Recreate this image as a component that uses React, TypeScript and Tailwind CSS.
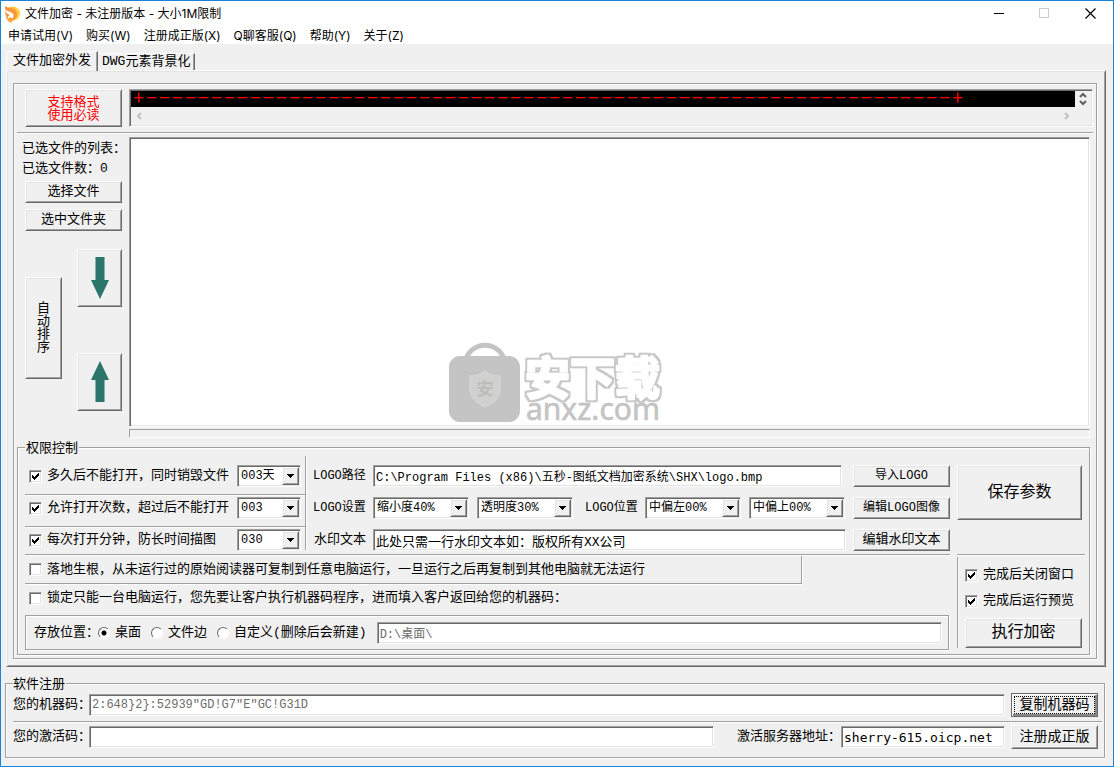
import { useState, type ReactNode } from 'react'
import clsx from 'clsx'

const SUNKEN =
    'border border-t-[#a0a0a0] border-l-[#a0a0a0] border-r-white border-b-white shadow-[inset_1px_1px_0_#696969,inset_-1px_-1px_0_#e3e3e3]'
const RAISED =
    'border border-t-white border-l-white border-r-[#696969] border-b-[#696969] shadow-[inset_1px_1px_0_#e3e3e3,inset_-1px_-1px_0_#a0a0a0]'
const GROOVE = 'border border-[#a0a0a0] shadow-[1px_1px_0_#fff,inset_1px_1px_0_#fff]'

const MENU = ['申请试用(V)', '购买(W)', '注册成正版(X)', 'Q聊客服(Q)', '帮助(Y)', '关于(Z)']
const BANNER = '＋' + '－'.repeat(62) + '＋'

function Button({ children, className, label }: { children: ReactNode; className?: string; label?: string }) {
    return (
        <button type="button" aria-label={label} className={clsx('flex shrink-0 items-center justify-center bg-[#f0f0f0]', RAISED, className)}>
            {children}
        </button>
    )
}

function Divider({ className }: { className?: string }) {
    return <div className={clsx('h-[2px] border-t border-b border-t-[#a0a0a0] border-b-white', className)} />
}

function Select({ id, value, className, label }: { id: string; value: string; className: string; label: string }) {
    return (
        <div className={clsx('relative h-[22px] shrink-0', className)}>
            <select
                id={id}
                aria-label={label}
                defaultValue={value}
                className={clsx('h-full w-full appearance-none bg-white pr-5 pl-[3px] text-xs leading-4 outline-none', SUNKEN)}
            >
                <option>{value}</option>
            </select>
            <span className={clsx('pointer-events-none absolute top-[2px] right-[2px] flex h-[18px] w-[17px] items-center justify-center bg-[#f0f0f0]', RAISED)}>
                <svg width="7" height="4" viewBox="0 0 7 4" shapeRendering="crispEdges">
                    <path d="M0 0h7v1H6v1H5v1H4v1H3V3H2V2H1V1H0z" />
                </svg>
            </span>
        </div>
    )
}

function Check({ label, checked, className }: { label: string; checked?: boolean; className?: string }) {
    const [on, setOn] = useState(!!checked)
    return (
        <label className={clsx('flex items-center gap-[5px] whitespace-nowrap', className)}>
            <span className="grid h-[13px] w-[13px] shrink-0">
                <input
                    type="checkbox"
                    checked={on}
                    onChange={(e) => setOn(e.target.checked)}
                    className={clsx('col-start-1 row-start-1 h-[13px] w-[13px] appearance-none bg-white', SUNKEN)}
                />
                {on && (
                    <svg className="pointer-events-none col-start-1 row-start-1" width="13" height="13" viewBox="0 0 13 13" shapeRendering="crispEdges">
                        <path d="M3 5h1v1h1v1h1V6h1V5h1V4h1V3h1v3H9v1H8v1H7v1H6v1H5V9H4V8H3z" />
                    </svg>
                )}
            </span>
            {label}
        </label>
    )
}

function Radio({ label, checked }: { label: string; checked?: boolean }) {
    return (
        <label className="flex items-center gap-[5px] whitespace-nowrap">
            <input
                type="radio"
                name="location"
                defaultChecked={checked}
                className="h-3 w-3 appearance-none rounded-full border border-t-[#696969] border-r-white border-b-white border-l-[#696969] bg-white checked:bg-[radial-gradient(circle,#000_2px,#fff_3px)]"
            />
            {label}
        </label>
    )
}

function Chevron({ d, color }: { d: string; color: string }) {
    return (
        <svg width="8" height="8" viewBox="0 0 8 8" fill="none" stroke={color} strokeWidth="2">
            <path d={d} />
        </svg>
    )
}

function Arrow({ up }: { up?: boolean }) {
    return (
        <svg width="18" height="42" viewBox="0 0 18 42" fill="#2b756b">
            <path d={up ? 'M9 0 18 19H13.500V41H4.500V19H0z' : 'M4.500 0H13.500V23H18L9 42 0 23H4.500z'} />
        </svg>
    )
}

function TitleBar() {
    return (
        <header className="bg-white font-[Inter,'Noto_Sans_CJK_SC',sans-serif] text-xs">
            <div className="flex h-[25px] items-center">
                <svg className="mr-1 ml-1" width="16" height="18" viewBox="0 0 16 18">
                    <circle cx="8" cy="8.500" r="7" fill="#fdd23c" />
                    <path d="M0 1c2 2 5 1 7 2 4 1 6 4 5 8-1 3-4 5-8 6L2 14C0 10 0 5 0 1z" fill="#f7973a" />
                    <path d="M0 4c2 3 5 2 7 4 2 1 2 4 0 6l-1-2-4 2c1-2 1-3 3-4C2 9 0 7 0 4z" fill="#fff" />
                    <path d="M2 13c1 2 3 3 5 4" stroke="#f7b050" strokeWidth="2" fill="none" />
                </svg>
                <h1 className="flex-1">文件加密 - 未注册版本 - 大小1M限制</h1>
                <button type="button" aria-label="最小化" className="flex w-[45px] justify-center">
                    <svg width="11" height="11"><path d="M0 5.500h10" stroke="#000" /></svg>
                </button>
                <button type="button" aria-label="最大化" className="flex w-[45px] justify-center">
                    <svg width="11" height="11"><path d="M.5.5h9v9h-9z" fill="none" stroke="#ccc" /></svg>
                </button>
                <button type="button" aria-label="关闭" className="flex w-[46px] justify-center">
                    <svg width="11" height="11"><path d="M.5.5l10 10M10.500.5l-10 10" stroke="#000" strokeWidth="1.200" /></svg>
                </button>
            </div>
            <nav className="flex h-[18px] items-end gap-[13px] pl-[7px]">
                {MENU.map((item) => (
                    <a key={item} href="#" className="leading-4">
                        {item}
                    </a>
                ))}
            </nav>
        </header>
    )
}

function FileArea() {
    return (
        <>
            <div className="flex pt-[5px]">
                <Button className="ml-2 h-[38px] w-[97px] text-[#f00]">
                    <span className="pt-px leading-[13px]">
                        支持格式
                        <br />
                        使用必读
                    </span>
                </Button>
                <div className={clsx('ml-[7px] min-w-0 flex-1 p-px', SUNKEN)}>
                    <div className="flex h-4">
                        <input readOnly aria-label="说明" value={BANNER} className="h-4 min-w-0 flex-1 bg-black pl-px leading-4 font-bold text-[#f00] outline-none" />
                        <div className="flex w-4 flex-col items-center justify-center">
                            <Chevron d="M1 6l3-3 3 3" color="#606060" />
                            <Chevron d="M1 2l3 3 3-3" color="#606060" />
                        </div>
                    </div>
                    <div className="flex h-[18px] items-center justify-between pr-5 pl-1">
                        <Chevron d="M6 1L3 4l3 3" color="#bfbfbf" />
                        <Chevron d="M2 1l3 3-3 3" color="#bfbfbf" />
                    </div>
                </div>
            </div>
            <Divider className="mt-[5px]" />
            <div className="mt-[3px] mr-[3px] flex">
                <div className="w-28 shrink-0 pt-[2px]">
                    <p className="ml-[5px] h-5 leading-5 whitespace-nowrap">已选文件的列表：</p>
                    <p className="ml-[5px] h-5 leading-5 whitespace-nowrap">已选文件数：0</p>
                    <div className="mt-[2px] ml-2 flex w-[97px] flex-col gap-[6px]">
                        <Button className="h-[22px]">选择文件</Button>
                        <Button className="h-[22px]">选中文件夹</Button>
                    </div>
                    <div className="mt-[18px] ml-2 flex w-[97px] items-start justify-between">
                        <Button className="mt-7 h-[102px] w-[37px]">
                            <span className="w-[13px] leading-[13px]">自动排序</span>
                        </Button>
                        <div className="flex flex-col gap-[46px]">
                            <Button label="下移" className="h-[58px] w-[45px]">
                                <Arrow />
                            </Button>
                            <Button label="上移" className="h-[58px] w-[45px]">
                                <Arrow up />
                            </Button>
                        </div>
                    </div>
                </div>
                <div className="flex min-w-0 flex-1 flex-col gap-[2px]">
                    <div role="listbox" aria-label="已选文件" className={clsx('h-[290px] bg-white', SUNKEN)} />
                    <div className="h-[9px] border border-t-[#a0a0a0] border-r-white border-b-white border-l-[#a0a0a0]" />
                </div>
            </div>
        </>
    )
}

function Permissions() {
    return (
        <section className={clsx('mt-[9px] mr-[3px] flex flex-col pr-1 pb-1 pl-[7px]', GROOVE)}>
            <h2 className="z-10 -mt-2 w-fit bg-[#f0f0f0] px-px leading-[18px]">权限控制</h2>
            <div className="-mt-[2px] flex gap-[7px]">
                <div className="min-w-0 flex-1">
                    <div className="flex">
                        <div className="w-[280px] shrink-0 pt-[9px] pb-[3px]">
                            <div className="flex h-[22px] items-center justify-between pr-1 pl-1">
                                <Check checked label="多久后不能打开，同时销毁文件" />
                                <Select id="days" label="天数" value="003天" className="w-16" />
                            </div>
                            <Divider className="mt-[7px] mb-px" />
                            <div className="flex h-[22px] items-center justify-between pr-1 pl-1">
                                <Check checked label="允许打开次数，超过后不能打开" />
                                <Select id="times" label="次数" value="003" className="w-16" />
                            </div>
                            <Divider className="mt-[7px] mb-px" />
                            <div className="flex h-[22px] items-center justify-between pr-1 pl-1">
                                <Check checked label="每次打开分钟，防长时间描图" />
                                <Select id="minutes" label="分钟" value="030" className="w-16" />
                            </div>
                        </div>
                        <div className="mb-1 w-[2px] border-r border-l border-r-white border-l-[#a0a0a0]" />
                        <div className="flex min-w-0 flex-1 flex-col gap-[10px] pt-[9px] pb-[3px] pl-[6px]">
                            <div className="flex h-[22px] items-center">
                                <label htmlFor="logo" className="w-[60px] shrink-0 text-xs">
                                    LOGO路径
                                </label>
                                <input
                                    id="logo"
                                    defaultValue="C:\Program Files (x86)\五秒-图纸文档加密系统\SHX\logo.bmp"
                                    className={clsx('mr-[11px] h-[22px] min-w-0 flex-1 bg-white pl-[2px] text-xs outline-none', SUNKEN)}
                                />
                                <Button className="h-[22px] w-[97px] text-xs">导入LOGO</Button>
                            </div>
                            <div className="flex h-[22px] items-center">
                                <label htmlFor="scale" className="w-[60px] shrink-0 text-xs">
                                    LOGO设置
                                </label>
                                <Select id="scale" label="缩小度" value="缩小度40%" className="mr-2 w-24" />
                                <Select id="alpha" label="透明度" value="透明度30%" className="w-24" />
                                <label htmlFor="posx" className="ml-3 w-[60px] shrink-0 text-xs">
                                    LOGO位置
                                </label>
                                <Select id="posx" label="水平位置" value="中偏左00%" className="mr-2 w-24" />
                                <Select id="posy" label="垂直位置" value="中偏上00%" className="mr-auto w-24" />
                                <Button className="h-[22px] w-[97px] text-xs">编辑LOGO图像</Button>
                            </div>
                            <div className="flex h-[22px] items-center">
                                <label htmlFor="mark" className="w-[60px] shrink-0 pl-px">
                                    水印文本
                                </label>
                                <input
                                    id="mark"
                                    defaultValue="此处只需一行水印文本如：版权所有XX公司"
                                    className={clsx('mr-[7px] h-[22px] min-w-0 flex-1 bg-white pl-[2px] outline-none', SUNKEN)}
                                />
                                <Button className="h-[22px] w-[97px]">编辑水印文本</Button>
                            </div>
                        </div>
                    </div>
                    <Divider />
                    <div className="flex h-7 w-[84%] items-center border-r border-b border-[#a0a0a0] pl-1 shadow-[1px_1px_0_#fff]">
                        <Check label="落地生根，从未运行过的原始阅读器可复制到任意电脑运行，一旦运行之后再复制到其他电脑就无法运行" />
                    </div>
                    <div className="flex h-7 items-center pl-1">
                        <Check label="锁定只能一台电脑运行，您先要让客户执行机器码程序，进而填入客户返回给您的机器码：" />
                    </div>
                    <div className={clsx('mt-[3px] mr-px flex h-[35px] items-center pr-[6px] pl-2', GROOVE)}>
                        <span className="w-16 shrink-0 whitespace-nowrap">存放位置：</span>
                        <div className="mr-[10px] flex gap-[10px]">
                            <Radio checked label="桌面" />
                            <Radio label="文件边" />
                            <Radio label="自定义(删除后会新建)" />
                        </div>
                        <input aria-label="自定义位置" disabled value={'D:\\桌面\\'} className={clsx('h-[22px] min-w-0 flex-1 bg-white pl-[2px] text-xs text-[#6d6d6d]', SUNKEN)} />
                    </div>
                </div>
                <div className="flex w-32 shrink-0 flex-col">
                    <Button className="mt-[9px] mr-[3px] h-[55px] text-base">保存参数</Button>
                    <Divider className="mt-[34px]" />
                    <div className="mt-px flex flex-col border-l border-[#a0a0a0] pr-[3px] pl-[7px] shadow-[inset_1px_0_0_#fff]">
                        <Check checked label="完成后关闭窗口" className="mt-[5px] h-[26px]" />
                        <Check checked label="完成后运行预览" className="h-[26px]" />
                        <Button className="mt-1 h-[30px] text-base">执行加密</Button>
                    </div>
                </div>
            </div>
        </section>
    )
}

function Registration() {
    return (
        <section className={clsx('mt-4 mr-2 mb-[6px] ml-1 flex flex-col pb-[9px]', GROOVE)}>
            <h2 className="z-10 -mt-2 ml-[7px] w-fit bg-[#f0f0f0] pr-px leading-[18px]">软件注册</h2>
            <div className="flex h-[22px] items-center pr-[6px] pl-[7px]">
                <label htmlFor="machine" className="w-[76px] shrink-0 whitespace-nowrap">
                    您的机器码：
                </label>
                <input id="machine" readOnly value="2:648}2}:52939″GD!G7″E″GC!G31D" className={clsx('h-[22px] min-w-0 flex-1 bg-white pl-[2px] text-xs text-[#6d6d6d] outline-none', SUNKEN)} />
                <button type="button" className="ml-[6px] h-6 w-[87px] border border-[#696969] bg-[#f0f0f0] p-[2px] text-sm shadow-[inset_1px_1px_0_#fff,inset_-2px_-2px_0_#888]">
                    <span className="block border border-dotted border-black leading-4">复制机器码</span>
                </button>
            </div>
            <Divider className="mt-[5px] mr-[2px] ml-[7px]" />
            <div className="mt-[3px] flex h-[22px] items-center pr-[6px] pl-[7px]">
                <label htmlFor="code" className="w-[76px] shrink-0 whitespace-nowrap">
                    您的激活码：
                </label>
                <input id="code" className={clsx('h-[22px] min-w-0 flex-1 bg-white pl-[2px] text-xs outline-none', SUNKEN)} />
                <label htmlFor="server" className="ml-[23px] w-[104px] shrink-0 whitespace-nowrap">
                    激活服务器地址：
                </label>
                <input
                    id="server"
                    defaultValue="sherry-615.oicp.net"
                    className={clsx("h-[22px] w-[164px] bg-white pl-[2px] font-['DejaVu_Sans_Mono',monospace] outline-none", SUNKEN)}
                />
                <Button className="ml-[6px] h-6 w-[87px] text-sm">注册成正版</Button>
            </div>
        </section>
    )
}

function Watermark() {
    return (
        <div className="pointer-events-none absolute inset-0 z-20 flex items-center justify-center">
            <svg className="overflow-visible" width="216" height="84" viewBox="0 0 216 84">
                <filter id="outline" x="-5%" y="-10%" width="110%" height="120%">
                    <feMorphology in="SourceAlpha" operator="dilate" radius="2" result="fat" />
                    <feFlood floodColor="#c8c8c8" />
                    <feComposite in2="fat" operator="in" result="edge" />
                    <feMerge>
                        <feMergeNode in="edge" />
                        <feMergeNode in="SourceGraphic" />
                    </feMerge>
                </filter>
                <path d="M17 17a20 20 0 0 1 38 0" fill="none" stroke="#c4c4c4" strokeWidth="5" />
                <rect x="0" y="14" width="71" height="66" rx="11" fill="#c4c4c4" />
                <path d="M36 29c5 4 10 5 15 5v14c0 8-7 13-15 17-8-4-15-9-15-17V34c5 0 10-1 15-5z" fill="#d0d0ce" stroke="#dadada" />
                <text x="36" y="53" textAnchor="middle" fontSize="17" fontWeight="bold" fill="#bdbdbd" fontFamily="Noto Sans CJK SC, sans-serif">
                    安
                </text>
                <text
                    x="76"
                    y="53"
                    fontSize="45"
                    fontWeight="bold"
                    fill="#fff"
                    stroke="#fff"
                    strokeWidth="2.500"
                    strokeLinejoin="round"
                    filter="url(#outline)"
                    fontFamily="Noto Sans CJK SC, sans-serif"
                >
                    安下载
                </text>
                <text x="77" y="78" fontSize="30" fill="#c4c4c4" stroke="#c4c4c4" strokeWidth=".6" fontFamily="Noto Sans, sans-serif">
                    anxz.com
                </text>
            </svg>
        </div>
    )
}

export default function App() {
    return (
        <div className="relative min-h-screen border border-[#1883d7] bg-[#f0f0f0] font-['Liberation_Mono','Noto_Sans_CJK_SC',monospace] text-[13px] leading-4 text-black">
            <TitleBar />
            <div role="tablist" className="flex items-end pt-[7px] pl-[5px]">
                <button
                    type="button"
                    role="tab"
                    aria-selected="true"
                    className="z-10 -mb-px h-5 border-t border-r border-l border-t-white border-r-[#696969] border-l-white bg-[#f0f0f0] px-[6px] pb-[2px] shadow-[inset_-1px_0_0_#a0a0a0]"
                >
                    文件加密外发
                </button>
                <button
                    type="button"
                    role="tab"
                    aria-selected="false"
                    className="h-[17px] border-t border-r border-t-white border-r-[#696969] px-1 shadow-[inset_-1px_0_0_#a0a0a0]"
                >
                    DWG元素背景化
                </button>
            </div>
            <main className={clsx('mr-[7px] ml-[5px] pt-3 pr-2 pb-[7px] pl-[6px]', RAISED)}>
                <div className={clsx('pr-[3px] pb-[3px] pl-[3px]', GROOVE)}>
                    <FileArea />
                    <Permissions />
                </div>
            </main>
            <Registration />
            <Watermark />
        </div>
    )
}
